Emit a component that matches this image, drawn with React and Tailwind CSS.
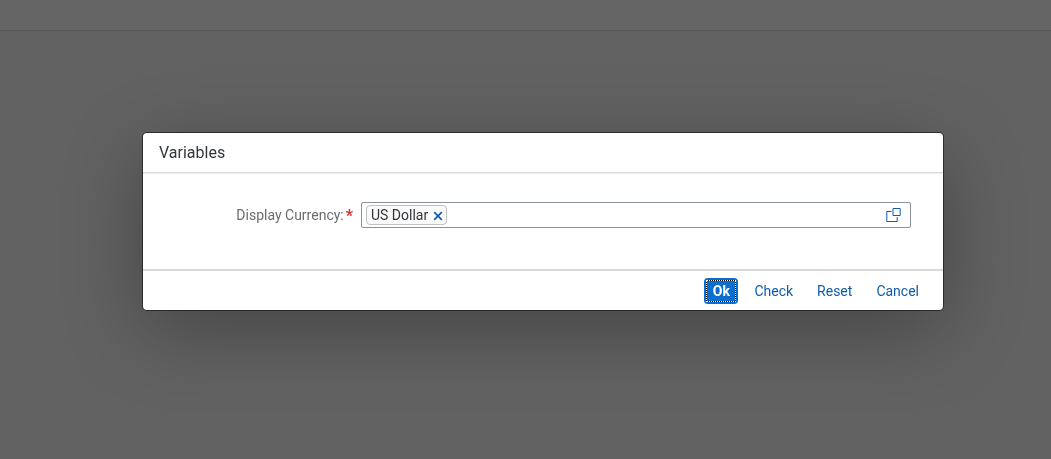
import { useState } from "react";

const actionClass =
  "h-[26px] rounded px-2 text-sm leading-none text-[#0f5caa] hover:bg-[#ebf5fe]";

function ValueHelpIcon() {
  return (
    <svg width="16" height="16" viewBox="0 0 16 16" fill="none" stroke="#0f5caa" aria-hidden="true">
      <path d="M7 1.5h7.2v7H7z" />
      <path d="M5.5 4.5H.8v10h10.4V10" />
    </svg>
  );
}

function RemoveIcon() {
  return (
    <svg width="10" height="10" viewBox="0 0 10 10" fill="none" stroke="#0f5caa" strokeWidth="1.7" aria-hidden="true">
      <path d="M1.2 1.2l7.6 7.6M8.8 1.2L1.2 8.8" />
    </svg>
  );
}

export default function App() {
  const [tokens, setTokens] = useState(["US Dollar"]);

  return (
    <div className="flex min-h-screen flex-col bg-[#626262] font-[Roboto,'Noto_Sans',sans-serif]">
      <header className="h-[31px] border-b border-[#5b5b5b] bg-[#656565]" />
      <main className="fixed inset-0 flex items-center justify-center pb-4 pl-[35px]">
        <form
          role="dialog"
          aria-labelledby="dialog-title"
          onSubmit={(e) => e.preventDefault()}
          className="w-full max-w-[800px] rounded bg-white shadow-[0_0_0_1px_rgba(0,0,0,0.5),0_20px_80px_rgba(0,0,0,0.3)]"
        >
          <div className="flex h-10 items-center border-b border-[#d9d9d9] px-4 shadow-[0_1px_1px_rgba(0,0,0,0.06)]">
            <h1 id="dialog-title" className="text-base text-[#32363a]">
              Variables
            </h1>
          </div>

          <div className="flex h-24 items-start pt-[29px] pr-8 pl-4">
            <label
              htmlFor="currency"
              className="flex h-[26px] w-[194px] shrink-0 items-center justify-end text-sm text-[#6a6d70]"
            >
              Display Currency:
              <span className="pt-0.5 pl-0.5 text-base leading-none font-bold text-[#d9302c]">*</span>
            </label>
            <div className="ml-2 flex h-[26px] min-w-0 flex-1 items-center rounded-xs border border-[#89919a] bg-white pl-1">
              {tokens.map((token) => (
                <span
                  key={token}
                  className="flex h-5 shrink-0 items-center gap-[5px] rounded border border-[#c2c2c2] bg-[#fafafa] pr-[3px] pl-1 text-sm leading-none text-[#32363a]"
                >
                  {token}
                  <button
                    type="button"
                    aria-label="Remove"
                    className="pt-px"
                    onClick={() => setTokens(tokens.filter((t) => t !== token))}
                  >
                    <RemoveIcon />
                  </button>
                </span>
              ))}
              <input
                id="currency"
                type="text"
                required={tokens.length === 0}
                className="h-full min-w-0 flex-1 bg-transparent px-1 text-sm text-[#32363a] outline-none"
              />
              <button
                type="button"
                aria-label="Value help"
                className="flex h-full w-8 items-center justify-center"
              >
                <ValueHelpIcon />
              </button>
            </div>
          </div>

          <div className="flex h-[41px] items-center justify-end gap-2 border-t-2 border-[#d9d9d9] px-4">
            <button
              type="submit"
              className="h-[26px] w-[34px] rounded bg-[#0a6ed1] p-0.5 text-sm leading-none font-bold text-white"
            >
              <span className="flex h-full bg-black">
                <span className="flex flex-1 items-center justify-center border border-dotted border-white bg-[#0a6ed1] bg-clip-padding">
                  Ok
                </span>
              </span>
            </button>
            <button type="button" className={actionClass}>
              Check
            </button>
            <button type="reset" className={actionClass}>
              Reset
            </button>
            <button type="button" className={actionClass}>
              Cancel
            </button>
          </div>
        </form>
      </main>
    </div>
  );
}
